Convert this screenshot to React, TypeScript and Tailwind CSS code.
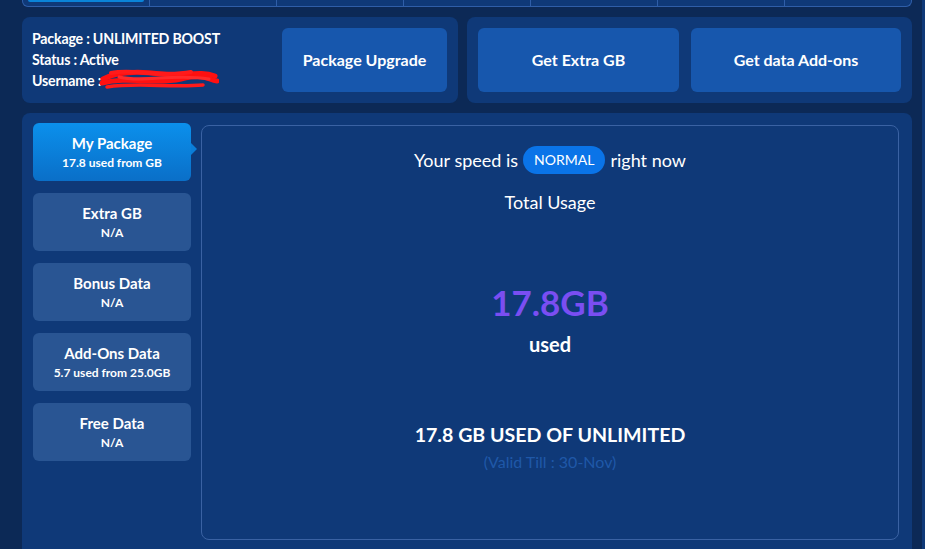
import React from 'react'

const TABS = [0, 1, 2, 3, 4, 5, 6]

const SIDE = [
  { title: 'My Package', sub: '17.8 used from GB', active: true },
  { title: 'Extra GB', sub: 'N/A' },
  { title: 'Bonus Data', sub: 'N/A' },
  { title: 'Add-Ons Data', sub: '5.7 used from 25.0GB' },
  { title: 'Free Data', sub: 'N/A' },
]

// hand-drawn redaction over the username
function Scribble() {
  return (
    <svg width="120" height="24" viewBox="0 0 120 24" className="inline-block -ml-[2px] -mt-[4px]">
      <path d="M4 12 C20 4, 40 4, 62 7 S100 3, 116 9" stroke="#ff1010" strokeWidth="5" fill="none" strokeLinecap="round" />
      <path d="M3 16 C30 9, 55 18, 82 12 S108 13, 118 14" stroke="#ff1010" strokeWidth="5" fill="none" strokeLinecap="round" />
      <path d="M12 6 C35 1, 60 11, 92 5" stroke="#ff1a1a" strokeWidth="4" fill="none" strokeLinecap="round" />
      <path d="M8 20 C40 15, 70 21, 104 18" stroke="#ff1a1a" strokeWidth="3.5" fill="none" strokeLinecap="round" />
      <path d="M20 10 C45 16, 75 6, 110 12" stroke="#ff2a2a" strokeWidth="3" fill="none" strokeLinecap="round" />
    </svg>
  )
}

export default function App() {
  return (
    <div className="w-[925px] h-[549px] overflow-hidden bg-[#0c2956] font-['Lato','Open_Sans',sans-serif] text-white flex">
      <div className="ml-[22px] w-[890px] flex flex-col">

        {/* Tab strip (scrolled past) */}
        <div className="h-[7px] flex bg-[#0f3978] border-b border-x border-[#2f5ea8] rounded-b-[6px]">
          {TABS.map(i => (
            <div key={i} className={`flex-1 ${i > 0 ? 'border-l border-[#2f5ea8]' : ''}`}>
              {i === 0 && <div className="mx-[5px] h-[2px] bg-[#0a84d8] rounded-b-[3px]" />}
            </div>
          ))}
        </div>

        {/* Top cards */}
        <div className="mt-[10px] flex gap-[9px] h-[86px]">
          <div className="w-[436px] bg-[#0f3978] rounded-[8px] flex items-center pl-[10px] pr-[11px]">
            <div className="flex-1 -mt-[1px] text-[14.2px] font-bold leading-[21px] tracking-[-0.2px]">
              <div>Package : UNLIMITED BOOST</div>
              <div>Status : Active</div>
              <div className="flex items-center h-[21px]">Username : <Scribble /></div>
            </div>
            <button className="w-[165px] h-[64px] rounded-[6px] bg-[#1757ad] text-[16px] font-bold">
              Package Upgrade
            </button>
          </div>
          <div className="flex-1 bg-[#0f3978] rounded-[8px] flex items-center gap-[12px] px-[11px]">
            <button className="w-[201px] h-[64px] rounded-[6px] bg-[#1757ad] text-[16px] font-bold">
              Get Extra GB
            </button>
            <button className="flex-1 h-[64px] rounded-[6px] bg-[#1757ad] text-[16px] font-bold">
              Get data Add-ons
            </button>
          </div>
        </div>

        {/* Main panel */}
        <div className="mt-[10px] flex-1 bg-[#0f3978] rounded-t-[8px] flex pt-[10px] pl-[11px]">
          <div className="w-[158px] flex flex-col gap-[12px]">
            {SIDE.map(s => (
              <div
                key={s.title}
                className={`relative h-[58px] rounded-[6px] flex flex-col items-center justify-center ${
                  s.active ? 'bg-gradient-to-b from-[#0b90ec] to-[#0a6fc8]' : 'bg-[#295593]'
                }`}
              >
                <div className="text-[15px] font-bold leading-[19px]">{s.title}</div>
                <div className="text-[12px] font-bold leading-[16px] mt-[2px]">{s.sub}</div>
                {s.active && (
                  <div className="absolute right-[-6px] top-[20px] w-0 h-0 border-y-[6px] border-y-transparent border-l-[6px] border-l-[#0a7dd8]" />
                )}
              </div>
            ))}
          </div>

          <div className="ml-[10px] mt-[2px] w-[698px] h-[415px] border border-[#3a62a3] rounded-[8px] flex flex-col items-center">
            <div className="mt-[20px] flex items-center text-[18px] leading-[28px]">
              <span>Your speed is</span>
              <span className="mx-[5px] h-[28px] px-[11px] rounded-full bg-[#0a74e8] text-[14px] flex items-center">NORMAL</span>
              <span>right now</span>
            </div>
            <div className="mt-[16px] text-[18px] leading-[24px]">Total Usage</div>
            <div className="mt-[66px] text-[35px] font-bold leading-[44px] text-[#7a4ef2]">17.8GB</div>
            <div className="mt-[7px] text-[20px] font-bold leading-[26px]">used</div>
            <div className="mt-[66px] text-[19.6px] font-bold leading-[24px]">17.8 GB USED OF UNLIMITED</div>
            <div className="mt-[5px] text-[16px] leading-[20px] text-[#1f58a8]">(Valid Till : 30-Nov)</div>
          </div>
        </div>
      </div>
      <div className="ml-auto w-[3px] bg-[#0f3978]" />
    </div>
  )
}
